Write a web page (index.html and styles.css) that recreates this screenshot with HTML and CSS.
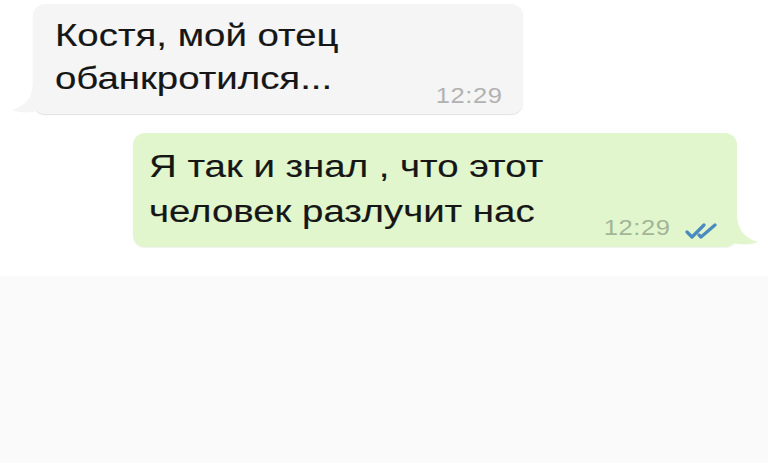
FILE: index.html
```html
<!DOCTYPE html>
<html lang="ru">
<head>
    <meta charset="UTF-8">
    <meta name="viewport" content="width=device-width, initial-scale=1.0">
    <title>Чат</title>
    <link rel="stylesheet" href="styles.css">
</head>
<body>
    <div class="chat">
        <!-- incoming message -->
        <div class="msg msg-in">
            <div class="bubble">
                <p class="text">Костя, мой отец<br>обанкротился...</p>
                <span class="time">12:29</span>
            </div>
            <svg class="tail" width="30" height="34" viewBox="0 0 30 34">
                <path d="M23 0 C23 14 18 24 2 29 C8 32 18 32 30 30 L30 0 Z" fill="#f5f5f5"/>
            </svg>
        </div>

        <!-- outgoing message -->
        <div class="msg msg-out">
            <div class="bubble">
                <p class="text">Я так и знал , что этот<br>человек разлучит нас</p>
                <span class="time">12:29</span>
                <svg class="ticks" width="37" height="17" viewBox="0 0 37 17">
                    <path d="M2 9 L7 14 L19 2" fill="none" stroke="#4a8bbf" stroke-width="3.2" stroke-linecap="round" stroke-linejoin="round"/>
                    <path d="M14 12 L16 14 L30 2" fill="none" stroke="#4a8bbf" stroke-width="3.2" stroke-linecap="round" stroke-linejoin="round"/>
                </svg>
            </div>
            <svg class="tail" width="30" height="34" viewBox="0 0 30 34">
                <path d="M7 0 C7 14 12 24 28 29 C22 32 12 32 0 30 L0 0 Z" fill="#e1f6cc"/>
            </svg>
        </div>
    </div>
    <div class="bottom"></div>
</body>
</html>
```

FILE: styles.css
```css
body {
    margin: 0;
    background-color: #ffffff;
    font-family: "Liberation Sans", Arial, sans-serif;
    color: #161616;
}
.chat {
    padding-top: 4px;
    height: 272px;
}
.msg {
    position: relative;
    display: flex;
}
.msg-in {
    margin-left: 33px;
}
.msg-out {
    margin-left: 133px;
    margin-top: 19px;
}
.bubble {
    display: flex;
    align-items: flex-end;
    justify-content: space-between;
    border-radius: 12px;
    box-sizing: border-box;
}
.msg-in .bubble {
    width: 490px;
    height: 110px;
    padding: 10px 20px 0 22px;
    background-color: #f5f5f5;
    box-shadow: 0 1px 1px rgba(0, 0, 0, 0.12);
}
.msg-out .bubble {
    width: 604px;
    height: 114px;
    padding: 11px 15px 0 16px;
    background-color: #e1f6cc;
    box-shadow: 0 1px 1px rgba(0, 0, 0, 0.06);
}
/* the screenshot is stretched sideways, so the text is widened to match */
.text {
    margin: 0;
    align-self: flex-start;
    font-size: 32px;
    line-height: 43px;
    flex: 1;
    transform: scaleX(1.2);
    transform-origin: left top;
    -webkit-text-stroke: 0.15px #161616;
}
.msg-out .text {
    line-height: 45px;
}
.time {
    font-size: 22px;
    line-height: 22px;
    color: #b2b2b2;
    letter-spacing: 0.5px;
    transform: scaleX(1.16);
    transform-origin: right bottom;
}
.msg-in .time {
    margin-bottom: 7px;
}
.msg-out .time {
    color: #a3b597;
    margin-bottom: 8px;
}
.ticks {
    margin-left: 14px;
    margin-bottom: 7px;
}
.tail {
    position: absolute;
    bottom: 0;
}
.msg-in .tail {
    left: -23px;
    bottom: -1px;
}
.msg-out .tail {
    left: 597px;
    bottom: 0;
}
.bottom {
    height: 191px;
    background-color: #fafafa;
}
```
